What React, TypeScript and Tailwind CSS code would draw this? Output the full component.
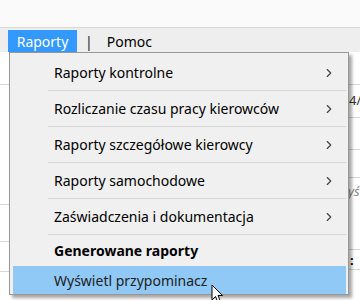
import { ChevronRight } from 'lucide-react';

const items = [
  { label: 'Raporty kontrolne', sub: true },
  { label: 'Rozliczanie czasu pracy kierowców', sub: true },
  { label: 'Raporty szczegółowe kierowcy', sub: true },
  { label: 'Raporty samochodowe', sub: true },
  { label: 'Zaświadczenia i dokumentacja', sub: true },
];

function Cursor() {
  return (
    <svg className="absolute left-[211px] top-[284px]" width="13" height="20" viewBox="0 0 13 20">
      <path d="M1 1 L1 16 L4.5 12.5 L7 18.5 L9.5 17.5 L7 11.5 L11.5 11.5 Z" fill="#fff" stroke="#000" strokeWidth="1" strokeLinejoin="round" />
    </svg>
  );
}

export default function App() {
  return (
    <div className="relative w-[360px] h-[300px] overflow-hidden bg-white font-['Noto_Sans',sans-serif] text-[14px] text-black">
      <div className="h-[28px] bg-[#fafafa] border-b border-[#d9d9d9]" />
      <div className="h-[24px] bg-[#eeeeee] flex items-end pl-[8px]">
        <div className="h-[22px] w-[69px] bg-[#3399ff] text-white flex items-center justify-center">Raporty</div>
        <div className="ml-[8px] h-[22px] flex items-center text-[#222]">|</div>
        <div className="ml-[14px] h-[22px] flex items-center">Pomoc</div>
      </div>

      {/* table behind the menu */}
      <div className="flex h-[248px]">
        <div className="w-[12px] flex flex-col">
          <div className="h-[33px] border-b border-[#d6d6d6]" />
          <div className="h-[120px] border-b border-[#d6d6d6]" />
          <div className="h-[37px] border-b border-[#d6d6d6]" />
          <div className="h-[30px] border-b border-[#d6d6d6]" />
        </div>
        <div className="flex-1" />
        <div className="w-[12px] flex flex-col text-[13px]">
          <div className="h-[33px] border-b border-[#d6d6d6]" />
          <div className="h-[33px] border-b border-[#d6d6d6] pt-[6px] pl-[1px] text-[#333]">4/</div>
          <div className="h-[32px] border-b border-[#d6d6d6]" />
          <div className="h-[28px] border-b border-[#d6d6d6]" />
          <div className="h-[72px] border-b border-[#d6d6d6] pt-[4px] italic text-[#888]">yś</div>
          <div className="h-[20px] border-b border-[#d6d6d6] pl-[2px] font-bold leading-[20px]">:</div>
        </div>
      </div>

      {/* dropdown */}
      <div className="absolute left-[9px] top-[52px] w-[340px] h-[243px] bg-[#f0f0f0] border border-[#979797] shadow-[3px_3px_3px_rgba(0,0,0,0.35)] flex flex-col p-[2px]">
        {items.map((it) => (
          <div key={it.label} className="flex h-[36px] shrink-0">
            <div className="w-[36px]" />
            <div className="flex-1 flex items-center border-b border-[#d7d7d7]">
              <span className="pl-[6px] flex-1">{it.label}</span>
              <ChevronRight className="w-[14px] h-[14px] mr-[10px] text-[#444]" strokeWidth={2} />
            </div>
          </div>
        ))}
        <div className="flex h-[31px] shrink-0">
          <div className="w-[36px]" />
          <div className="flex-1 flex items-center pl-[6px] font-bold">Generowane raporty</div>
        </div>
        <div className="flex h-[28px] shrink-0 bg-[#90c8f6] ml-[1px]">
          <div className="w-[35px]" />
          <div className="flex-1 flex items-center pl-[6px] text-[#222]">Wyświetl przypominacz</div>
        </div>
      </div>

      <Cursor />
    </div>
  );
}
